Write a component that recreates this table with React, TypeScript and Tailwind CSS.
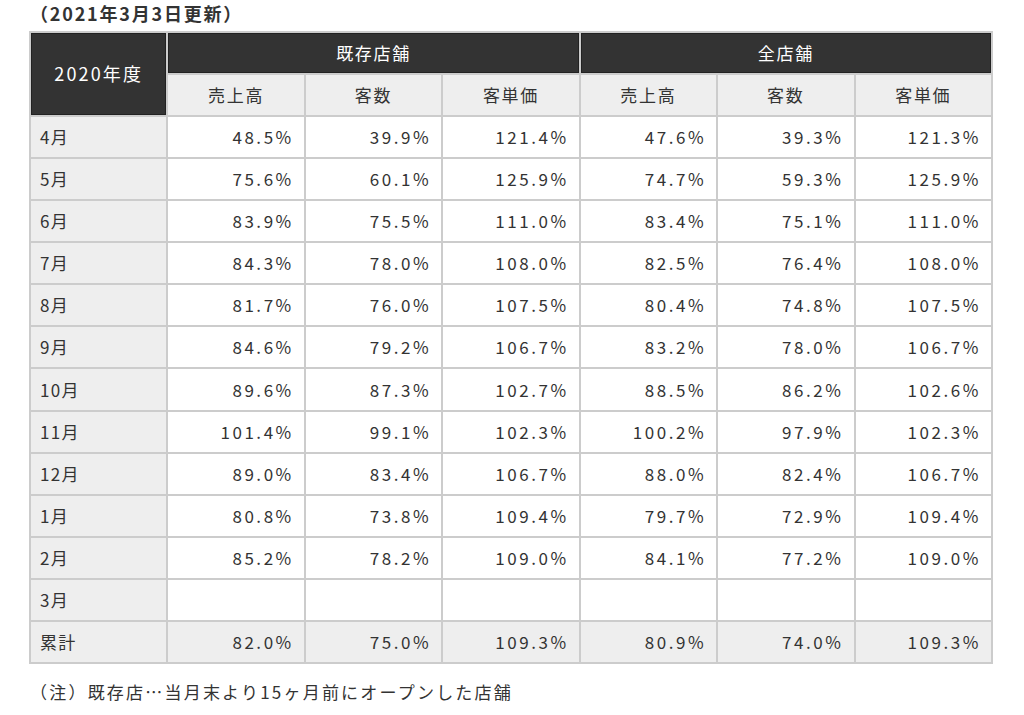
import React from "react";

const rows: [string, string[]][] = [
  ["4月", ["48.5%", "39.9%", "121.4%", "47.6%", "39.3%", "121.3%"]],
  ["5月", ["75.6%", "60.1%", "125.9%", "74.7%", "59.3%", "125.9%"]],
  ["6月", ["83.9%", "75.5%", "111.0%", "83.4%", "75.1%", "111.0%"]],
  ["7月", ["84.3%", "78.0%", "108.0%", "82.5%", "76.4%", "108.0%"]],
  ["8月", ["81.7%", "76.0%", "107.5%", "80.4%", "74.8%", "107.5%"]],
  ["9月", ["84.6%", "79.2%", "106.7%", "83.2%", "78.0%", "106.7%"]],
  ["10月", ["89.6%", "87.3%", "102.7%", "88.5%", "86.2%", "102.6%"]],
  ["11月", ["101.4%", "99.1%", "102.3%", "100.2%", "97.9%", "102.3%"]],
  ["12月", ["89.0%", "83.4%", "106.7%", "88.0%", "82.4%", "106.7%"]],
  ["1月", ["80.8%", "73.8%", "109.4%", "79.7%", "72.9%", "109.4%"]],
  ["2月", ["85.2%", "78.2%", "109.0%", "84.1%", "77.2%", "109.0%"]],
  ["3月", ["", "", "", "", "", ""]],
];

const subHeads = ["売上高", "客数", "客単価", "売上高", "客数", "客単価"];

const cell = "border-2 border-[#ccc] h-[42.15px] px-3 leading-[20px]";
const dark = "border-2 border-[#ccc] bg-[#333] text-white font-normal shadow-[inset_0_0_0_1px_#222] tracking-[0.1em]";

export default function App() {
  return (
    <div className="w-[1024px] h-[715px] bg-white text-[#333] text-[17px] [font-family:'Noto_Sans_CJK_JP','Noto_Sans',sans-serif] pl-[29px] pt-[1px]">
      <p className="h-[30px] leading-[24px] font-bold text-[18px] pl-[1px] tracking-[0.1em]">（2021年3月3日更新）</p>
      <table className="border-collapse table-fixed w-[964px]">
        <thead>
          <tr>
            <th rowSpan={2} className={`${dark} h-[83px] text-[18px] tracking-[0.12em]`}>2020年度</th>
            <th colSpan={3} className={`${dark} h-[41.5px]`}>既存店舗</th>
            <th colSpan={3} className={`${dark} h-[41.5px]`}>全店舗</th>
          </tr>
          <tr>
            {subHeads.map((h, i) => (
              <th key={i} className={`${cell} bg-[#eee] font-normal text-center tracking-[0.1em]`}>{h}</th>
            ))}
          </tr>
        </thead>
        <tbody>
          {rows.map(([m, vals]) => (
            <tr key={m}>
              <td className={`${cell} bg-[#eee] text-left pl-[9px] tracking-[0.08em]`}>{m}</td>
              {vals.map((v, i) => (
                <td key={i} className={`${cell} bg-white text-right pr-[10px] tracking-[0.15em]`}>{v}</td>
              ))}
            </tr>
          ))}
          <tr>
            <td className={`${cell} bg-[#eee] text-left pl-[9px] tracking-[0.08em]`}>累計</td>
            {["82.0%", "75.0%", "109.3%", "80.9%", "74.0%", "109.3%"].map((v, i) => (
              <td key={i} className={`${cell} bg-[#eee] text-right pr-[10px] tracking-[0.15em]`}>{v}</td>
            ))}
          </tr>
        </tbody>
      </table>
      <p className="mt-[15px] pl-[1px] tracking-[0.13em]">（注）既存店…当月末より15ヶ月前にオープンした店舗</p>
    </div>
  );
}
